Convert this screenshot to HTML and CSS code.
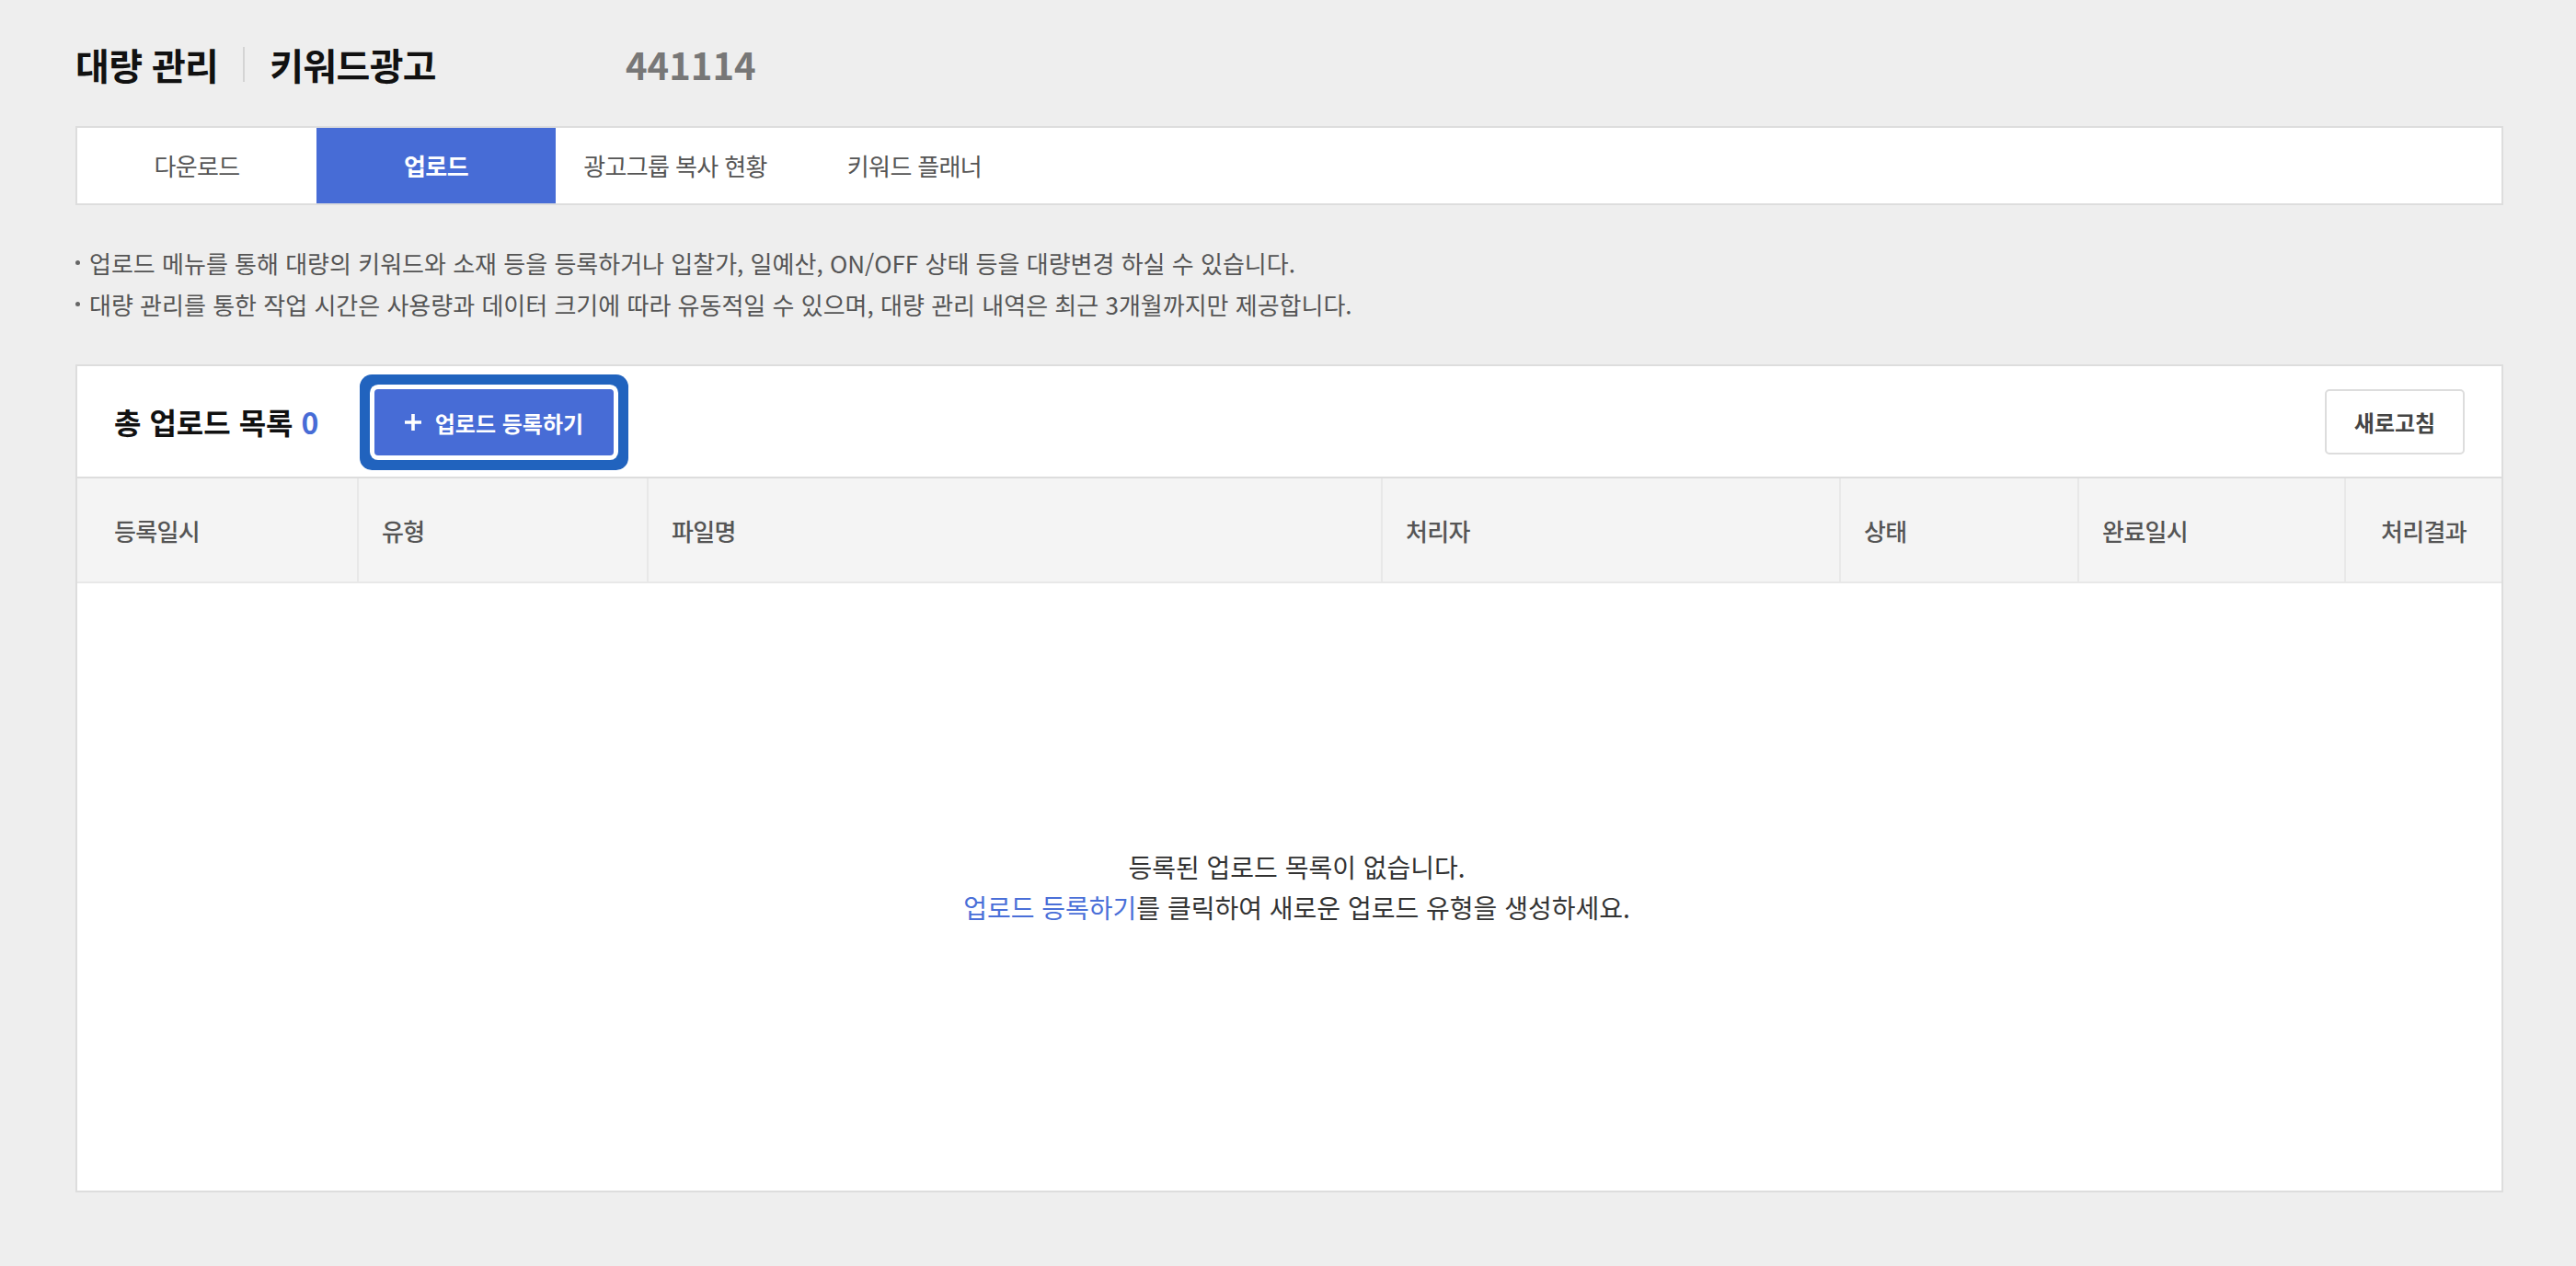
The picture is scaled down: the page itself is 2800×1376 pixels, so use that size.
FILE: index.html
```
<!DOCTYPE html>
<html lang="ko">
<head>
    <meta charset="UTF-8">
    <meta name="viewport" content="width=device-width, initial-scale=1.0">
    <title>대량 관리 - 업로드</title>
    <link rel="stylesheet" href="styles.css">
</head>
<body>
    <div class="wrap">
        <!-- PAGE TITLE -->
        <div class="title-row">
            <h1 class="title">대량 관리</h1>
            <span class="title-bar"></span>
            <h2 class="title">키워드광고</h2>
            <span class="account">441114</span>
        </div>

        <!-- TABS -->
        <ul class="tabs">
            <li class="tab">다운로드</li>
            <li class="tab active">업로드</li>
            <li class="tab">광고그룹 복사 현황</li>
            <li class="tab">키워드 플래너</li>
        </ul>

        <ul class="notice">
            <li>업로드 메뉴를 통해 대량의 키워드와 소재 등을 등록하거나 입찰가, 일예산, ON/OFF 상태 등을 대량변경 하실 수 있습니다.</li>
            <li>대량 관리를 통한 작업 시간은 사용량과 데이터 크기에 따라 유동적일 수 있으며, 대량 관리 내역은 최근 3개월까지만 제공합니다.</li>
        </ul>

        <!-- UPLOAD LIST -->
        <div class="panel">
            <div class="panel-head">
                <div class="panel-title">총 업로드 목록 <span class="count">0</span></div>
                <button class="btn-primary">
                    <svg width="20" height="20" viewBox="0 0 20 20"><path d="M10 1v18M1 10h18" stroke="#fff" stroke-width="3.6" fill="none"/></svg>
                    <span>업로드 등록하기</span>
                </button>
                <button class="btn-line">새로고침</button>
            </div>
            <table class="list">
                <colgroup>
                    <col style="width:305px">
                    <col style="width:315px">
                    <col style="width:798px">
                    <col style="width:498px">
                    <col style="width:259px">
                    <col style="width:290px">
                    <col>
                </colgroup>
                <thead>
                    <tr>
                        <th class="first">등록일시</th>
                        <th>유형</th>
                        <th>파일명</th>
                        <th>처리자</th>
                        <th>상태</th>
                        <th>완료일시</th>
                        <th class="center">처리결과</th>
                    </tr>
                </thead>
                <tbody>
                    <tr>
                        <td colspan="7" class="empty">
                            <p>등록된 업로드 목록이 없습니다.</p>
                            <p><a href="#" class="link">업로드 등록하기</a>를 클릭하여 새로운 업로드 유형을 생성하세요.</p>
                        </td>
                    </tr>
                </tbody>
            </table>
        </div>
    </div>
</body>
</html>
```

FILE: styles.css
```
/* PAGE */
body{
    margin: 0;
    background-color: #eeeeee;
    font-family: "Noto Sans CJK KR", "Noto Sans", sans-serif;
    color: #333;
}
.wrap{
    padding: 46px 79px 0 82px;
}

/* TITLE */
.title-row{
    display: flex;
    align-items: center;
    height: 48px;
}
.title{
    margin: 0;
    font-size: 40px;
    line-height: 48px;
    font-weight: 700;
    color: #111;
    letter-spacing: -0.64px;
}
.title-bar{
    width: 2px;
    height: 38px;
    margin: 0 27px 0 27px;
    background-color: #d4d4d4;
}
.account{
    margin-left: 206px;
    font-size: 40px;
    font-weight: 700;
    color: #777;
}

/* TABS */
.tabs{
    display: flex;
    margin: 43px 0 0 0;
    padding: 0;
    list-style: none;
    background-color: #fff;
    border: 2px solid #dddddd;
}
.tab{
    width: 260px;
    height: 82px;
    line-height: 82px;
    text-align: center;
    font-size: 26px;
    letter-spacing: -0.64px;
    color: #555;
    cursor: pointer;
}
.tab.active{
    background-color: #476cd6;
    color: #fff;
    font-weight: 700;
}

/* NOTICE */
.notice{
    margin: 40px 0 0 0;
    padding: 0;
    list-style: none;
    font-size: 26px;
    line-height: 45px;
    color: #555;
}
.notice li{
    position: relative;
    padding-left: 15px;
}
.notice li::before{
    content: "";
    position: absolute;
    left: 0;
    top: 20px;
    width: 5px;
    height: 5px;
    border-radius: 50%;
    background-color: #666;
}

/* PANEL */
.panel{
    margin-top: 43px;
    background-color: #fff;
    border: 2px solid #dddddd;
}
.panel-head{
    display: flex;
    align-items: center;
    height: 120px;
    padding: 0 40px 0 40px;
    border-bottom: 2px solid #dddddd;
}
.panel-title{
    font-size: 32px;
    font-weight: 700;
    color: #111;
}
.count{
    color: #476cd6;
}
.btn-primary{
    display: flex;
    align-items: center;
    justify-content: center;
    gap: 14px;
    width: 260px;
    height: 72px;
    margin: 2px 0 0 61px;
    padding: 0 2px 0 0;
    border: none;
    border-radius: 4px;
    background-color: #476cd6;
    color: #fff;
    font-family: inherit;
    font-size: 24px;
    font-weight: 700;
    box-shadow: 0 0 0 5px #fff, 0 0 0 16px #2163be;
    cursor: pointer;
}
.btn-line{
    width: 152px;
    height: 71px;
    margin-left: auto;
    padding: 0;
    border: 2px solid #dddddd;
    border-radius: 5px;
    background-color: #fff;
    color: #444;
    font-family: inherit;
    font-size: 24px;
    font-weight: 700;
    cursor: pointer;
}

/* TABLE */
.list{
    width: 100%;
    border-collapse: collapse;
    table-layout: fixed;
}
.list th{
    height: 112px;
    padding: 0 0 0 25px;
    background-color: #f4f4f4;
    border-left: 2px solid #e8e8e8;
    border-bottom: 2px solid #e8e8e8;
    text-align: left;
    font-size: 26px;
    font-weight: 500;
    letter-spacing: -0.64px;
    color: #555;
}
.list th.first{
    padding-left: 40px;
    border-left: none;
}
.list th.center{
    padding: 0;
    text-align: center;
}
.empty{
    height: 660px;
    padding: 0 0 0 16px;
    text-align: center;
    vertical-align: middle;
    font-size: 28px;
    line-height: 44px;
    color: #333;
}
.empty p{
    margin: 0;
}
.link{
    color: #4a6fd8;
    text-decoration: none;
}
```
